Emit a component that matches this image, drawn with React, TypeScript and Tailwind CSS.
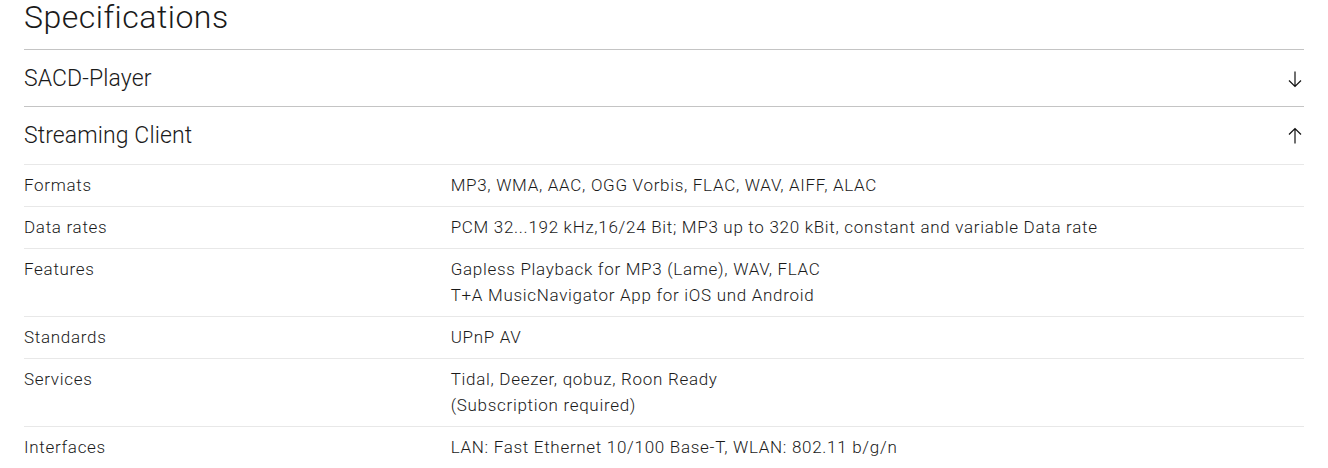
import React, { useState } from 'react';

const specs = [
  { label: 'Formats', value: ['MP3, WMA, AAC, OGG Vorbis, FLAC, WAV, AIFF, ALAC'] },
  { label: 'Data rates', value: ['PCM 32...192 kHz,16/24 Bit; MP3 up to 320 kBit, constant and variable Data rate'] },
  { label: 'Features', value: ['Gapless Playback for MP3 (Lame), WAV, FLAC', 'T+A MusicNavigator App for iOS und Android'] },
  { label: 'Standards', value: ['UPnP AV'] },
  { label: 'Services', value: ['Tidal, Deezer, qobuz, Roon Ready', '(Subscription required)'] },
  { label: 'Interfaces', value: ['LAN: Fast Ethernet 10/100 Base-T, WLAN: 802.11 b/g/n'] },
];

// thin arrow, points down; rotated for the open state
const Arrow = ({ up }: { up?: boolean }) => (
  <svg
    width="16"
    height="18"
    viewBox="0 0 16 18"
    fill="none"
    stroke="#111"
    strokeWidth="1.2"
    className={up ? 'rotate-180' : ''}
  >
    <path d="M8 1.5v15M2 10.5l6 6 6-6" />
  </svg>
);

const Section = ({ title, open, onToggle }: { title: string; open: boolean; onToggle: () => void }) => (
  <button
    onClick={onToggle}
    className="w-full flex items-center justify-between h-[57px] border-t border-[#c4c4c4] text-left"
  >
    <span className="pt-[3px] text-[23px] tracking-[0.1px] font-light text-[#1a1a1a]">{title}</span>
    <span className="pr-[1px] pt-[2px]">
      <Arrow up={open} />
    </span>
  </button>
);

export default function App() {
  const [open, setOpen] = useState<Record<string, boolean>>({ sacd: false, stream: true });

  return (
    <div className="bg-white min-h-screen px-6 font-['Roboto',sans-serif] text-[#1a1a1a]">
      <h2 className="text-[32px] leading-[34px] tracking-[0.5px] font-light mb-[15px]">Specifications</h2>

      <Section title="SACD-Player" open={open.sacd} onToggle={() => setOpen({ ...open, sacd: !open.sacd })} />
      <Section title="Streaming Client" open={open.stream} onToggle={() => setOpen({ ...open, stream: !open.stream })} />

      {open.stream && (
        <div className="mt-[1px]">
          {specs.map(s => (
            <div
              key={s.label}
              className="grid grid-cols-3 border-t border-[#e8e8e8] pt-[7px] pb-2 text-[17px] leading-[26px] tracking-[0.7px] font-light"
            >
              <div>{s.label}</div>
              <div className="col-span-2">
                {s.value.map(v => (
                  <div key={v}>{v}</div>
                ))}
              </div>
            </div>
          ))}
        </div>
      )}
    </div>
  );
}
